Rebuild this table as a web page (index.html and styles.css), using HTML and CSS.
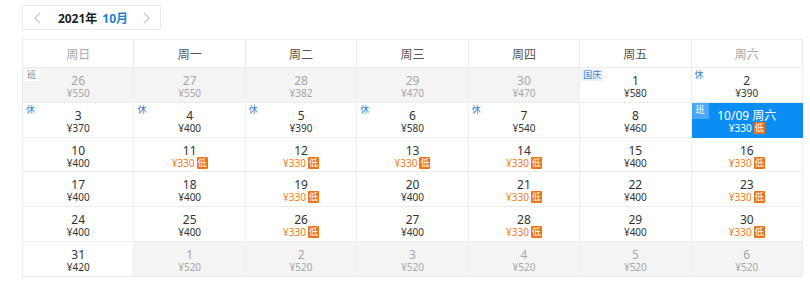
FILE: index.html
```html
<!DOCTYPE html>
<html lang="zh">
<head>
<meta charset="utf-8">
<link rel="stylesheet" href="styles.css">
</head>
<body>
<div class="page">
  <div class="nav">
    <svg class="arrow" width="7" height="12" viewBox="0 0 7 12"><path d="M6 1 L1 6 L6 11" fill="none" stroke="#c8c8c8" stroke-width="1.2"/></svg>
    <span class="title"><b class="year">2021年</b><b class="month">10月</b></span>
    <svg class="arrow" width="7" height="12" viewBox="0 0 7 12"><path d="M1 1 L6 6 L1 11" fill="none" stroke="#c8c8c8" stroke-width="1.2"/></svg>
  </div>
  <div class="cal">
    <div class="hd wk">周日</div>
    <div class="hd">周一</div>
    <div class="hd">周二</div>
    <div class="hd">周三</div>
    <div class="hd">周四</div>
    <div class="hd">周五</div>
    <div class="hd wk">周六</div>

    <div class="cell off"><span class="tag tag-ban">班</span><div class="d">26</div><div class="p">¥550</div></div>
    <div class="cell off"><div class="d">27</div><div class="p">¥550</div></div>
    <div class="cell off"><div class="d">28</div><div class="p">¥382</div></div>
    <div class="cell off"><div class="d">29</div><div class="p">¥470</div></div>
    <div class="cell off"><div class="d">30</div><div class="p">¥470</div></div>
    <div class="cell"><span class="tag tag-hol">国庆</span><div class="d">1</div><div class="p">¥580</div></div>
    <div class="cell"><span class="tag tag-xiu">休</span><div class="d">2</div><div class="p">¥390</div></div>

    <div class="cell"><span class="tag tag-xiu">休</span><div class="d">3</div><div class="p">¥370</div></div>
    <div class="cell"><span class="tag tag-xiu">休</span><div class="d">4</div><div class="p">¥400</div></div>
    <div class="cell"><span class="tag tag-xiu">休</span><div class="d">5</div><div class="p">¥390</div></div>
    <div class="cell"><span class="tag tag-xiu">休</span><div class="d">6</div><div class="p">¥580</div></div>
    <div class="cell"><span class="tag tag-xiu">休</span><div class="d">7</div><div class="p">¥540</div></div>
    <div class="cell"><div class="d">8</div><div class="p">¥460</div></div>
    <div class="cell sel"><span class="tag tag-sel">班</span><div class="d">10/09 周六</div><div class="p">¥330<i class="low">低</i></div></div>

    <div class="cell"><div class="d">10</div><div class="p">¥400</div></div>
    <div class="cell"><div class="d">11</div><div class="p lo">¥330<i class="low">低</i></div></div>
    <div class="cell"><div class="d">12</div><div class="p lo">¥330<i class="low">低</i></div></div>
    <div class="cell"><div class="d">13</div><div class="p lo">¥330<i class="low">低</i></div></div>
    <div class="cell"><div class="d">14</div><div class="p lo">¥330<i class="low">低</i></div></div>
    <div class="cell"><div class="d">15</div><div class="p">¥400</div></div>
    <div class="cell"><div class="d">16</div><div class="p lo">¥330<i class="low">低</i></div></div>

    <div class="cell"><div class="d">17</div><div class="p">¥400</div></div>
    <div class="cell"><div class="d">18</div><div class="p">¥400</div></div>
    <div class="cell"><div class="d">19</div><div class="p lo">¥330<i class="low">低</i></div></div>
    <div class="cell"><div class="d">20</div><div class="p">¥400</div></div>
    <div class="cell"><div class="d">21</div><div class="p lo">¥330<i class="low">低</i></div></div>
    <div class="cell"><div class="d">22</div><div class="p">¥400</div></div>
    <div class="cell"><div class="d">23</div><div class="p lo">¥330<i class="low">低</i></div></div>

    <div class="cell"><div class="d">24</div><div class="p">¥400</div></div>
    <div class="cell"><div class="d">25</div><div class="p">¥400</div></div>
    <div class="cell"><div class="d">26</div><div class="p lo">¥330<i class="low">低</i></div></div>
    <div class="cell"><div class="d">27</div><div class="p">¥400</div></div>
    <div class="cell"><div class="d">28</div><div class="p lo">¥330<i class="low">低</i></div></div>
    <div class="cell"><div class="d">29</div><div class="p">¥400</div></div>
    <div class="cell"><div class="d">30</div><div class="p lo">¥330<i class="low">低</i></div></div>

    <div class="cell"><div class="d">31</div><div class="p">¥420</div></div>
    <div class="cell off"><div class="d">1</div><div class="p">¥520</div></div>
    <div class="cell off"><div class="d">2</div><div class="p">¥520</div></div>
    <div class="cell off"><div class="d">3</div><div class="p">¥520</div></div>
    <div class="cell off"><div class="d">4</div><div class="p">¥520</div></div>
    <div class="cell off"><div class="d">5</div><div class="p">¥520</div></div>
    <div class="cell off"><div class="d">6</div><div class="p">¥520</div></div>
  </div>
</div>
</body>
</html>
```

FILE: styles.css
```css
* { box-sizing: border-box; }
html, body { margin: 0; padding: 0; background: #fff; }
body {
  font-family: "Noto Sans", "Noto Sans CJK SC", sans-serif;
  color: #333;
}
.page {
  padding: 5px 0 0 22px;
}
.nav {
  width: 139px;
  height: 25px;
  border: 1px solid #ebebeb;
  border-radius: 2px;
  display: flex;
  align-items: center;
  justify-content: space-between;
  padding: 0 10px 0 11px;
}
.arrow { display: block; }
.title {
  font-size: 12px;
  display: flex;
  gap: 5px;
  margin-left: 2px;
}
.year { color: #222; font-weight: 700; }
.month { color: #1a7fd8; font-weight: 700; }

.cal {
  margin-top: 9px;
  width: 781px;
  display: grid;
  grid-template-columns: repeat(7, 1fr);
  grid-template-rows: 28px repeat(6, 34.8px);
  border-top: 1px solid #ececec;
  border-left: 1px solid #ececec;
}
.hd {
  display: flex;
  align-items: center;
  justify-content: center;
  font-size: 12px;
  color: #555;
  border-right: 1px solid #ececec;
  border-bottom: 1px solid #ececec;
  background: #fff;
}
.hd.wk { color: #a8a8a8; }
.cell {
  position: relative;
  border-right: 1px solid #efefef;
  border-bottom: 1px solid #ececec;
  background: #fff;
  display: flex;
  flex-direction: column;
  align-items: center;
  padding-top: 6px;
  font-size: 11px;
  color: #333;
}
.cell.off { background: #f4f4f4; color: #a6a6a6; }
.d { font-size: 12px; line-height: 13px; }
.p { font-size: 10px; line-height: 12px; display: flex; align-items: center; }
.p.lo { color: #f07c22; }
.low {
  font-style: normal;
  display: inline-block;
  background: #ec7419;
  color: #fff;
  font-size: 9px;
  line-height: 12px;
  height: 12px;
  padding: 0 1px;
  margin-left: 2px;
  border-radius: 1px;
}
.cell.sel {
  background: #0a8ef6;
  color: #fff;
  border-color: #0a8ef6;
}
.cell.sel .p { color: #fff; }
.tag {
  position: absolute;
  top: 1px;
  left: 1px;
  font-size: 9px;
  line-height: 12px;
  padding: 0 2px;
}
.tag-ban { background: #fff; color: #888; padding: 0 3px; }
.tag-xiu { color: #3d7fd0; }
.tag-hol { background: #e8f1fb; color: #3d7fd0; }
.tag-sel { background: #4aa8f7; color: #fff; top: 0; left: 0; padding: 1px 4px 3px; }
```
